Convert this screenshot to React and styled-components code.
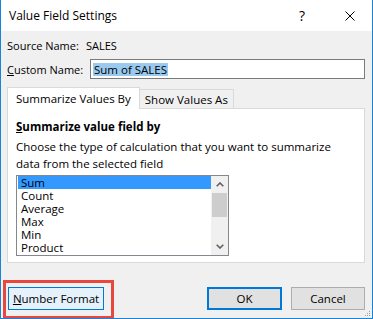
import styled, { createGlobalStyle } from "styled-components";

const FONT = `"Open Sans", "Noto Sans", sans-serif`;

const GlobalStyle = createGlobalStyle`
  html, body {
    margin: 0;
    padding: 0;
    background: #fff;
  }
  * {
    box-sizing: border-box;
  }
`;

const Window = styled.div`
  position: relative;
  width: 373px;
  height: 319px;
  display: flex;
  flex-direction: column;
  background: #f0f0f0;
  border: 1px solid #1883d7;
  border-top: none;
  font-family: ${FONT};
  font-size: 11.5px;
  color: #000;
  overflow: hidden;
`;

const TitleBar = styled.div`
  height: 31px;
  flex: none;
  display: flex;
  align-items: center;
  padding-left: 8px;
  background: #fff;
`;

const Title = styled.div`
  flex: 1;
  font-size: 12px;
  padding-bottom: 1px;
`;

const HelpGlyph = styled.div`
  width: 12px;
  margin-right: 37px;
  font-size: 14px;
  line-height: 1;
  text-align: center;
`;

const CloseIcon = styled.svg`
  width: 10px;
  height: 10px;
  margin-right: 17px;
`;

const Content = styled.div`
  flex: 1;
  display: flex;
  flex-direction: column;
  padding: 4px 7px 0 6px;
`;

const FieldRow = styled.div`
  height: 20px;
  display: flex;
  align-items: center;
  font-size: 11px;
  margin-bottom: ${({ $gap }) => $gap || 0}px;
`;

const Label = styled.div`
  width: ${({ $w }) => $w}px;
  flex: none;
`;

const Key = styled.span`
  text-decoration: underline;
  text-underline-offset: 1px;
`;

const TextInput = styled.div`
  width: 276px;
  height: 20px;
  display: flex;
  align-items: center;
  padding-left: 2px;
  background: #fff;
  border: 1px solid #7a7a7a;
  font-size: 11.5px;
`;

const Selected = styled.span`
  background: #99c9ef;
  padding: 0 1px;
  line-height: 13px;
`;

const TabStrip = styled.div`
  display: flex;
  align-items: flex-end;
  height: 22px;
  margin-top: 8px;
  position: relative;
  z-index: 1;
`;

const Tab = styled.div`
  height: ${({ $active }) => ($active ? 22 : 20)}px;
  padding: 0 ${({ $active }) => ($active ? 8 : 5)}px;
  display: flex;
  align-items: center;
  background: ${({ $active }) => ($active ? "#fff" : "#f0f0f0")};
  border: 1px solid #d9d9d9;
  border-bottom: ${({ $active }) => ($active ? "none" : "1px solid #d9d9d9")};
  margin-left: ${({ $active }) => ($active ? 0 : -1)}px;
  padding-bottom: ${({ $active }) => ($active ? 1 : 0)}px;
`;

const Panel = styled.div`
  width: 358px;
  height: 155px;
  margin-top: -1px;
  padding: 9px 8px 0 8px;
  background: #fff;
  border: 1px solid #d9d9d9;
`;

const GroupTitle = styled.div`
  font-weight: 700;
  height: 17px;
  line-height: 17px;
`;

const Hint = styled.div`
  margin-top: 3px;
  line-height: 17px;
  width: 330px;
`;

const ListBox = styled.div`
  margin-top: 3px;
  width: 213px;
  height: 81px;
  display: flex;
  border: 1px solid #828790;
  padding: 0 0 0 1px;
`;

const Items = styled.div`
  flex: 1;
  display: flex;
  flex-direction: column;
`;

const Item = styled.div`
  height: 13px;
  line-height: 13px;
  padding-left: 3px;
  background: ${({ $selected }) => ($selected ? "#3399ff" : "transparent")};
`;

const ScrollBar = styled.div`
  width: 17px;
  display: flex;
  flex-direction: column;
  align-items: center;
  background: #f0f0f0;
`;

const ArrowBox = styled.div`
  width: 17px;
  height: 17px;
  display: flex;
  align-items: center;
  justify-content: center;
`;

const Thumb = styled.div`
  width: 15px;
  height: 24px;
  background: #cdcdcd;
`;

const Track = styled.div`
  flex: 1;
`;

const Footer = styled.div`
  display: flex;
  align-items: center;
  margin-top: 24px;
  height: 23px;
`;

const Button = styled.div`
  height: 23px;
  width: ${({ $w }) => $w}px;
  display: flex;
  align-items: center;
  justify-content: center;
  background: ${({ $variant }) => ($variant === "hover" ? "#e5f1fb" : "#e1e1e1")};
  border: ${({ $variant }) =>
    $variant === "hover"
      ? "1px solid #0078d7"
      : $variant === "default"
      ? "2px solid #0078d7"
      : "1px solid #adadad"};
  margin-left: ${({ $ml }) => $ml || 0}px;
`;

const Callout = styled.div`
  position: absolute;
  left: 2px;
  top: 280px;
  width: 111px;
  height: 39px;
  border: 3px solid #e8473e;
  pointer-events: none;
`;

const Grip = styled.svg`
  position: absolute;
  right: 1px;
  bottom: 1px;
  width: 7px;
  height: 7px;
`;

const options = ["Sum", "Count", "Average", "Max", "Min", "Product"];

function Chevron({ down }) {
  return (
    <svg width="8" height="5" viewBox="0 0 8 5">
      <path
        d={down ? "M0.7 0.7 L4 4 L7.3 0.7" : "M0.7 4.3 L4 1 L7.3 4.3"}
        fill="none"
        stroke="#606060"
        strokeWidth="1.6"
      />
    </svg>
  );
}

export default function App() {
  return (
    <>
      <GlobalStyle />
      <Window>
        <TitleBar>
          <Title>Value Field Settings</Title>
          <HelpGlyph>?</HelpGlyph>
          <CloseIcon viewBox="0 0 10 10">
            <path d="M0.5 0.5 L9.5 9.5 M9.5 0.5 L0.5 9.5" stroke="#000" strokeWidth="1" />
          </CloseIcon>
        </TitleBar>
        <Content>
          <FieldRow $gap={4}>
            <Label $w={79}>Source Name:</Label>
            <span>SALES</span>
          </FieldRow>
          <FieldRow>
            <Label $w={83}>
              <Key>C</Key>ustom Name:
            </Label>
            <TextInput>
              <Selected>Sum of SALES</Selected>
            </TextInput>
          </FieldRow>

          <TabStrip>
            <Tab $active>Summarize Values By</Tab>
            <Tab>Show Values As</Tab>
          </TabStrip>
          <Panel>
            <GroupTitle>
              <Key>S</Key>ummarize value field by
            </GroupTitle>
            <Hint>
              Choose the type of calculation that you want to summarize data from the selected field
            </Hint>
            <ListBox>
              <Items>
                {options.map((o, i) => (
                  <Item key={o} $selected={i === 0}>
                    {o}
                  </Item>
                ))}
              </Items>
              <ScrollBar>
                <ArrowBox>
                  <Chevron />
                </ArrowBox>
                <Thumb />
                <Track />
                <ArrowBox>
                  <Chevron down />
                </ArrowBox>
              </ScrollBar>
            </ListBox>
          </Panel>

          <Footer>
            <Button $w={96} $variant="hover" $ml={1}>
              <span>
                <Key>N</Key>umber Format
              </span>
            </Button>
            <Button $w={75} $variant="default" $ml={103}>
              OK
            </Button>
            <Button $w={74} $ml={9}>
              Cancel
            </Button>
          </Footer>
        </Content>
        <Callout />
        <Grip viewBox="0 0 7 7">
          <g fill="#a0a0a0">
            <rect x="5" y="1" width="1" height="1" />
            <rect x="3" y="3" width="1" height="1" />
            <rect x="5" y="3" width="1" height="1" />
            <rect x="1" y="5" width="1" height="1" />
            <rect x="3" y="5" width="1" height="1" />
            <rect x="5" y="5" width="1" height="1" />
          </g>
        </Grip>
      </Window>
    </>
  );
}
